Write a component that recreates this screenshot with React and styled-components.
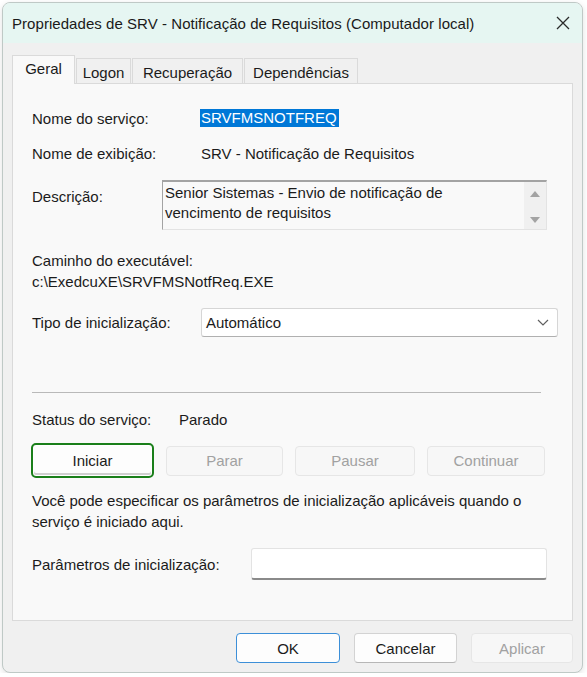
import React from "react";
import styled, { createGlobalStyle, css } from "styled-components";

const GlobalStyle = createGlobalStyle`
    body {
        margin: 0;
        background: #ffffff;
        font-family: "Segoe UI", "Liberation Sans", Arial, sans-serif;
        font-size: 15px;
        color: #1b1b1b;
    }
`;

const Window = styled.div`
    margin: 2px 0 0 2px;
    width: 579px;
    height: 669px;
    border: 1px solid #bfc9c6;
    border-radius: 8px;
    overflow: hidden;
    background: #f0f0f0;
    box-shadow: 0 2px 6px rgba(0, 0, 0, 0.12);
    display: flex;
    flex-direction: column;
`;

const TitleBar = styled.div`
    height: 40px;
    flex: none;
    display: flex;
    align-items: center;
    justify-content: space-between;
    padding: 0 11px 0 9px;
    background: #e6f6f2;
`;

const Title = styled.span`
    font-size: 15px;
    letter-spacing: 0.05px;
    color: #1a1a1a;
`;

const Body = styled.div`
    padding: 0 9px;
`;

const TabStrip = styled.div`
    display: flex;
    align-items: flex-end;
    height: 28px;
    margin-top: 12px;
    position: relative;
    z-index: 1;
`;

const Tab = styled.div`
    width: ${p => p.$w}px;
    display: flex;
    justify-content: center;
    align-items: center;
    box-sizing: border-box;
    border: 1px solid #dadada;
    border-bottom: none;
    margin-right: 1px;
    ${p => p.$active ? css`
        height: 29px;
        margin-bottom: -1px;
        background: #f9f9f9;
        padding-bottom: 4px;
    ` : css`
        height: 25px;
        background: #f0f0f0;
        padding-top: 2px;
    `}
`;

const Panel = styled.div`
    height: 536px;
    border: 1px solid #dadada;
    background: #f9f9f9;
    padding: 0 19px;
    display: flex;
    flex-direction: column;
`;

const Row = styled.div`
    display: flex;
    align-items: ${p => p.$top ? "flex-start" : "center"};
    margin-top: ${p => p.$mt}px;
    height: ${p => p.$h || 20}px;
`;

const Label = styled.div`
    width: ${p => p.$w}px;
    flex: none;
    padding-top: ${p => p.$pt || 0}px;
`;

const Selected = styled.span`
    background: #0078d7;
    color: #ffffff;
    padding: 0 2px 0 1px;
    margin-left: -1px;
    line-height: 18px;
`;

const DescBox = styled.div`
    width: 385px;
    height: 50px;
    flex: none;
    box-sizing: border-box;
    border-top: 2px solid #a3a3a3;
    border-left: 1px solid #a3a3a3;
    border-right: 1px solid #e3e3e3;
    border-bottom: 1px solid #e3e3e3;
    display: flex;
    background: #f9f9f9;
`;

const DescText = styled.div`
    flex: 1;
    line-height: 20px;
    padding: 0 2px;
    margin-top: 1px;
`;

const ScrollCol = styled.div`
    width: 22px;
    background: #f0f0f0;
    display: flex;
    flex-direction: column;
    justify-content: space-between;
    align-items: center;
    padding: 8px 0 5px;
    box-sizing: border-box;
`;

const Block = styled.div`
    margin-top: ${p => p.$mt}px;
    line-height: 21px;
`;

const Combo = styled.div`
    width: 357px;
    height: 29px;
    flex: none;
    box-sizing: border-box;
    background: #ffffff;
    border: 1px solid #d6d6d6;
    border-bottom-color: #b0b0b0;
    border-radius: 3px;
    display: flex;
    align-items: center;
    justify-content: space-between;
    padding: 0 8px 0 4px;
`;

const Separator = styled.div`
    margin-top: ${p => p.$mt}px;
    width: 509px;
    height: 1px;
    background: #b9b9b9;
`;

const ButtonRow = styled.div`
    display: flex;
    align-items: center;
    gap: 12px;
    margin-top: ${p => p.$mt}px;
    margin-left: ${p => p.$ml || 0}px;
    height: ${p => p.$h}px;
`;

const Button = styled.div`
    width: ${p => p.$w}px;
    height: ${p => p.$h || 30}px;
    flex: none;
    box-sizing: border-box;
    display: flex;
    align-items: center;
    justify-content: center;
    border-radius: 4px;
    background: #fdfdfd;
    border: 1px solid #d3d3d3;
    border-bottom-color: #b7b7b7;
    color: #1b1b1b;
    ${p => p.$disabled && css`
        background: #f7f7f7;
        border-color: #e6e6e6;
        color: #a1a1a1;
    `}
    ${p => p.$focus && css`
        border: 2px solid #1a7f1a;
        border-radius: 5px;
        box-shadow: inset 0 0 0 1px #ffffff, inset 0 -2px 0 1px #d0d0d0;
    `}
    ${p => p.$default && css`
        border: 1px solid #3c8fd8;
    `}
`;

const Input = styled.div`
    width: 296px;
    height: 32px;
    flex: none;
    box-sizing: border-box;
    background: #ffffff;
    border: 1px solid #e3e3e3;
    border-bottom: 2px solid #8a8a8a;
    border-radius: 3px;
`;

const Footer = styled.div`
    display: flex;
    justify-content: flex-end;
    gap: 14px;
    margin-top: 12px;
`;

const CloseIcon = () => (
    <svg width="16" height="16" viewBox="0 0 16 16">
        <path d="M2 2 L14 14 M14 2 L2 14" stroke="#2b2b2b" strokeWidth="1.3" fill="none" />
    </svg>
);

const Arrow = ({ up }) => (
    <svg width="12" height="8" viewBox="0 0 12 8">
        <path d={up ? "M1 7 L6 1 L11 7 Z" : "M1 1 L11 1 L6 7 Z"} fill="#a3a3a3" />
    </svg>
);

const Chevron = () => (
    <svg width="12" height="7" viewBox="0 0 12 7">
        <path d="M1 1 L6 6 L11 1" stroke="#5f5f5f" strokeWidth="1.2" fill="none" />
    </svg>
);

const App = () => {
    return (
        <>
            <GlobalStyle />
            <Window>
                <TitleBar>
                    <Title>Propriedades de SRV - Notificação de Requisitos (Computador local)</Title>
                    <CloseIcon />
                </TitleBar>
                <Body>
                    <TabStrip>
                        <Tab $w={63} $active>Geral</Tab>
                        <Tab $w={55}>Logon</Tab>
                        <Tab $w={111}>Recuperação</Tab>
                        <Tab $w={114}>Dependências</Tab>
                    </TabStrip>
                    <Panel>
                        <Row $mt={24}>
                            <Label $w={169}>Nome do serviço:</Label>
                            <Selected>SRVFMSNOTFREQ</Selected>
                        </Row>
                        <Row $mt={15}>
                            <Label $w={169}>Nome de exibição:</Label>
                            <span>SRV - Notificação de Requisitos</span>
                        </Row>
                        <Row $mt={17} $h={50} $top>
                            <Label $w={130} $pt={8}>Descrição:</Label>
                            <DescBox>
                                <DescText>Senior Sistemas - Envio de notificação de<br />vencimento de requisitos</DescText>
                                <ScrollCol>
                                    <Arrow up />
                                    <Arrow />
                                </ScrollCol>
                            </DescBox>
                        </Row>
                        <Block $mt={20}>
                            Caminho do executável:<br />
                            c:\ExedcuXE\SRVFMSNotfReq.EXE
                        </Block>
                        <Row $mt={16} $h={29}>
                            <Label $w={169}>Tipo de inicialização:</Label>
                            <Combo>
                                <span>Automático</span>
                                <Chevron />
                            </Combo>
                        </Row>
                        <Separator $mt={55} />
                        <Row $mt={16}>
                            <Label $w={147}>Status do serviço:</Label>
                            <span>Parado</span>
                        </Row>
                        <ButtonRow $mt={14} $h={35} $ml={-1}>
                            <Button $w={123} $h={35} $focus>Iniciar</Button>
                            <Button $w={117} $disabled>Parar</Button>
                            <Button $w={120} $disabled>Pausar</Button>
                            <Button $w={118} $disabled>Continuar</Button>
                        </ButtonRow>
                        <Block $mt={12}>
                            Você pode especificar os parâmetros de inicialização aplicáveis quando o<br />
                            serviço é iniciado aqui.
                        </Block>
                        <Row $mt={16} $h={32}>
                            <Label $w={219}>Parâmetros de inicialização:</Label>
                            <Input />
                        </Row>
                    </Panel>
                    <Footer>
                        <Button $w={104} $default>OK</Button>
                        <Button $w={103}>Cancelar</Button>
                        <Button $w={102} $disabled>Aplicar</Button>
                    </Footer>
                </Body>
            </Window>
        </>
    );
};

export default App;
